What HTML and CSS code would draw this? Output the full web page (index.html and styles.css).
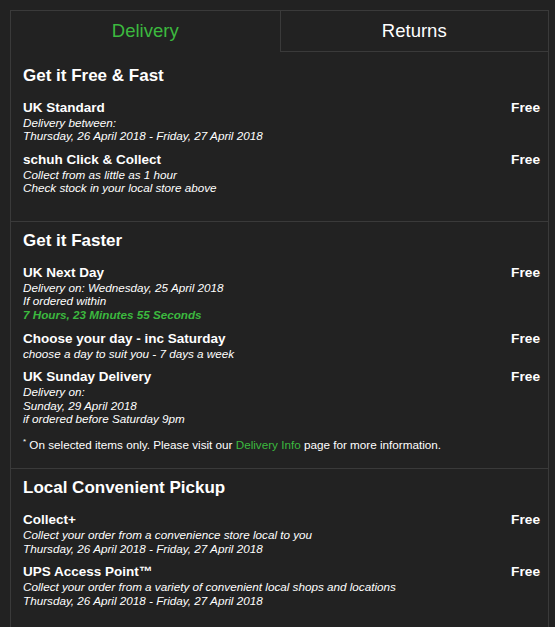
FILE: index.html
```html
<!DOCTYPE html>
<html lang="en">
<head>
<meta charset="utf-8">
<title>Delivery</title>
<link rel="stylesheet" href="styles.css">
</head>
<body>
<div class="panel">
  <div class="tabs">
    <div class="tab tab--active">Delivery</div>
    <div class="tab tab--inactive">Returns</div>
  </div>

  <section class="group group--first">
    <h2 class="group__title">Get it Free &amp; Fast</h2>
    <div class="option">
      <div class="option__info">
        <div class="option__name">UK Standard</div>
        <div class="option__desc">Delivery between:<br>Thursday, 26 April 2018 - Friday, 27 April 2018</div>
      </div>
      <div class="option__price">Free</div>
    </div>
    <div class="option">
      <div class="option__info">
        <div class="option__name">schuh Click &amp; Collect</div>
        <div class="option__desc">Collect from as little as 1 hour<br>Check stock in your local store above</div>
      </div>
      <div class="option__price">Free</div>
    </div>
  </section>

  <section class="group group--second">
    <h2 class="group__title">Get it Faster</h2>
    <div class="option">
      <div class="option__info">
        <div class="option__name">UK Next Day</div>
        <div class="option__desc">Delivery on: Wednesday, 25 April 2018<br>If ordered within<br><span class="countdown">7 Hours, 23 Minutes 55 Seconds</span></div>
      </div>
      <div class="option__price">Free</div>
    </div>
    <div class="option">
      <div class="option__info">
        <div class="option__name">Choose your day - inc Saturday</div>
        <div class="option__desc">choose a day to suit you - 7 days a week</div>
      </div>
      <div class="option__price">Free</div>
    </div>
    <div class="option">
      <div class="option__info">
        <div class="option__name">UK Sunday Delivery</div>
        <div class="option__desc">Delivery on:<br>Sunday, 29 April 2018<br>if ordered before Saturday 9pm</div>
      </div>
      <div class="option__price">Free</div>
    </div>
    <p class="note"><sup class="note__star">*</sup> On selected items only. Please visit our <a class="note__link" href="#">Delivery Info</a> page for more information.</p>
  </section>

  <section class="group group--last">
    <h2 class="group__title">Local Convenient Pickup</h2>
    <div class="option">
      <div class="option__info">
        <div class="option__name">Collect+</div>
        <div class="option__desc">Collect your order from a convenience store local to you<br>Thursday, 26 April 2018 - Friday, 27 April 2018</div>
      </div>
      <div class="option__price">Free</div>
    </div>
    <div class="option">
      <div class="option__info">
        <div class="option__name">UPS Access Point™</div>
        <div class="option__desc">Collect your order from a variety of convenient local shops and locations<br>Thursday, 26 April 2018 - Friday, 27 April 2018</div>
      </div>
      <div class="option__price">Free</div>
    </div>
  </section>
</div>
</body>
</html>
```

FILE: styles.css
```css
html, body {
  margin: 0;
  padding: 0;
  background: #222222;
}

body {
  font-family: "Liberation Sans", Arial, Helvetica, sans-serif;
  color: #ffffff;
  overflow: hidden;
}

.panel {
  margin: 10px 6px 0 10px;
  border: 1px solid #3a3a3a;
  border-bottom: none;
  min-height: 640px;
}

.tabs {
  display: grid;
  grid-template-columns: 1fr 1fr;
}

.tab {
  height: 41px;
  box-sizing: border-box;
  display: flex;
  align-items: center;
  justify-content: center;
  font-size: 18.5px;
  border-bottom: 1px solid transparent;
}

.tab--active {
  color: #3cb93f;
}

.tab--inactive {
  color: #ffffff;
  border-left: 1px solid #3a3a3a;
  border-bottom-color: #3a3a3a;
}

.group {
  padding: 9px 8px 16px 12px;
  border-top: 1px solid #3a3a3a;
}

.group--first {
  border-top: none;
  padding-top: 14px;
  padding-bottom: 26px;
}

.group--last {
  padding-bottom: 40px;
}

.group__title {
  margin: 0 0 15px;
  font-size: 17px;
  line-height: 20px;
  font-weight: bold;
}

.option {
  display: flex;
  justify-content: space-between;
  align-items: flex-start;
  margin-bottom: 10px;
}

.option:last-of-type {
  margin-bottom: 0;
}

.option__name {
  font-size: 13.5px;
  line-height: 14.5px;
  font-weight: bold;
}

.option__desc {
  font-size: 11.7px;
  line-height: 13.8px;
  font-style: italic;
}

.option__price {
  font-size: 13.7px;
  line-height: 14.5px;
  font-weight: bold;
}

.countdown {
  color: #3cb93f;
  font-weight: bold;
}

.note {
  margin: 12px 0 0;
  font-size: 11.7px;
  line-height: 14px;
}

.note__star {
  font-size: 8px;
  line-height: 0;
  vertical-align: 5px;
}

.note__link {
  color: #3cb93f;
  text-decoration: none;
}
```
